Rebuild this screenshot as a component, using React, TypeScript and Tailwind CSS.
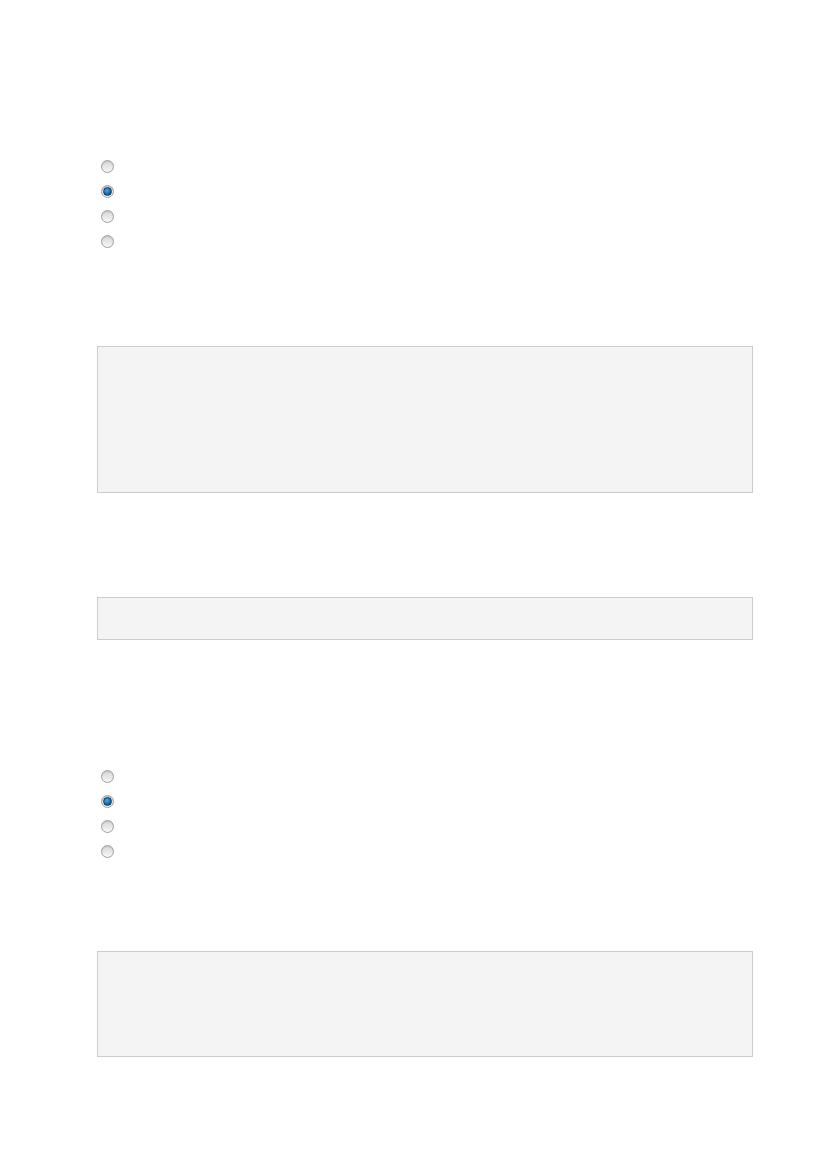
import React from 'react';

function Radio({ checked }: { checked?: boolean }) {
    return (
        <span className="w-[13px] h-[13px] rounded-full border border-[#9f9f9f] bg-gradient-to-b from-[#d6d6d6] to-[#f7f7f7] flex items-center justify-center shadow-[inset_0_1px_1px_rgba(0,0,0,0.1)]">
            {checked && (
                <span className="w-[9px] h-[9px] rounded-full border border-[#0b3a5e] bg-[radial-gradient(circle_at_40%_35%,#4aa8e6,#0d5c99_70%)]" />
            )}
        </span>
    );
}

function RadioGroup({ selected }: { selected: number }) {
    return (
        <div className="flex flex-col pl-[4px]">
            {[0, 1, 2, 3].map(i => (
                <div key={i} className="h-[25px] flex items-center">
                    <Radio checked={i === selected} />
                </div>
            ))}
        </div>
    );
}

export default function App() {
    return (
        <div className="w-[827px] min-h-[1169px] bg-white px-[97px] pt-[154px] font-['Liberation_Sans',sans-serif]">
            {/* First question */}
            <RadioGroup selected={1} />

            {/* Answer box */}
            <div className="mt-[92px] w-[656px] h-[147px] bg-[#f4f4f4] border border-[#cccccc]" />

            {/* Short input */}
            <div className="mt-[104px] w-[656px] h-[43px] bg-[#f4f4f4] border border-[#cccccc]" />

            {/* Second question */}
            <div className="mt-[124px]">
                <RadioGroup selected={1} />
            </div>

            {/* Second answer box */}
            <div className="mt-[87px] w-[656px] h-[106px] bg-[#f4f4f4] border border-[#cccccc]" />
        </div>
    );
}
